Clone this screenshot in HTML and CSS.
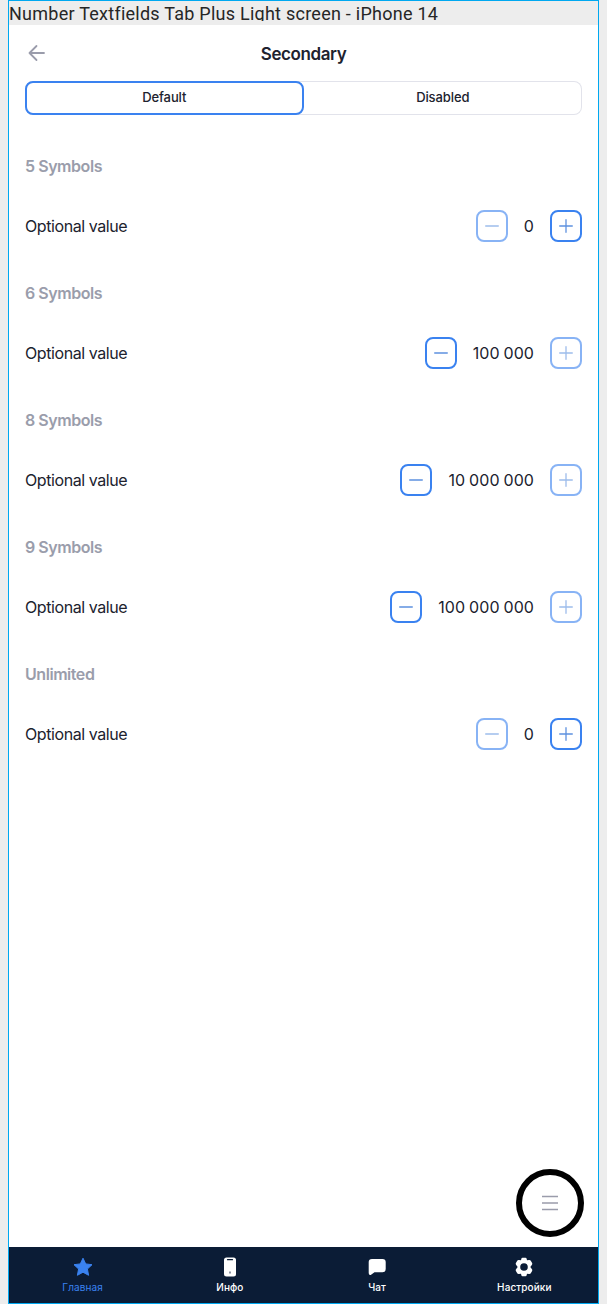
FILE: index.html
```html
<!DOCTYPE html>
<html lang="en">
<head>
<meta charset="utf-8">
<title>Number Textfields</title>
<link rel="stylesheet" href="styles.css">
</head>
<body>
<svg class="defs" width="0" height="0">
  <symbol id="minus" viewBox="0 0 14 14"><path d="M.7 7h12.6"/></symbol>
  <symbol id="plus" viewBox="0 0 14 14"><path d="M.7 7h12.6M7 .7v12.6"/></symbol>
</svg>
<div class="frame">
  <div class="caption">Number Textfields Tab Plus Light screen - iPhone 14</div>
  <header class="header">
    <svg class="back" width="18" height="18" viewBox="0 0 18 18"><path d="M8.500 2 1.500 9l7 7M1.500 9h14.500"/></svg>
    <h1 class="title">Secondary</h1>
  </header>
  <div class="tabs">
    <div class="tab tab-active">Default</div>
    <div class="tab">Disabled</div>
  </div>
  <main class="content">
    <section class="group">
      <h2 class="heading">5 Symbols</h2>
      <div class="row"><span class="label">Optional value</span>
        <div class="stepper"><button class="step off"><svg><use href="#minus"/></svg></button><span class="value">0</span><button class="step"><svg><use href="#plus"/></svg></button></div></div>
    </section>
    <section class="group">
      <h2 class="heading">6 Symbols</h2>
      <div class="row"><span class="label">Optional value</span>
        <div class="stepper"><button class="step"><svg><use href="#minus"/></svg></button><span class="value">100 000</span><button class="step off"><svg><use href="#plus"/></svg></button></div></div>
    </section>
    <section class="group">
      <h2 class="heading">8 Symbols</h2>
      <div class="row"><span class="label">Optional value</span>
        <div class="stepper"><button class="step"><svg><use href="#minus"/></svg></button><span class="value">10 000 000</span><button class="step off"><svg><use href="#plus"/></svg></button></div></div>
    </section>
    <section class="group">
      <h2 class="heading">9 Symbols</h2>
      <div class="row"><span class="label">Optional value</span>
        <div class="stepper"><button class="step"><svg><use href="#minus"/></svg></button><span class="value">100 000 000</span><button class="step off"><svg><use href="#plus"/></svg></button></div></div>
    </section>
    <section class="group">
      <h2 class="heading">Unlimited</h2>
      <div class="row"><span class="label">Optional value</span>
        <div class="stepper"><button class="step off"><svg><use href="#minus"/></svg></button><span class="value">0</span><button class="step"><svg><use href="#plus"/></svg></button></div></div>
    </section>
  </main>
  <button class="fab"><svg width="18" height="16" viewBox="0 0 18 16"><path d="M1 1.500h16M1 8h16M1 14.500h16"/></svg></button>
  <nav class="nav">
    <a class="item active">
      <svg width="20" height="20" viewBox="0 0 20 20"><path d="m10 1.200 2.700 5.700 6.300.8-4.600 4.300 1.200 6.300-5.600-3.100-5.600 3.100 1.200-6.300L1 7.700l6.300-.8z" stroke="currentColor" stroke-linejoin="round"/></svg>
      <span>Главная</span></a>
    <a class="item">
      <svg width="20" height="20" viewBox="0 0 20 20"><rect x="4" y=".5" width="12" height="19" rx="2.500"/><path d="M7.500 2.700h5" stroke="#0b1c36" stroke-width="1.200" stroke-linecap="round"/><rect class="home" x="9" y="14.500" width="2" height="2"/></svg>
      <span>Инфо</span></a>
    <a class="item">
      <svg width="20" height="20" viewBox="0 0 20 20"><path d="M5 2h10.500Q18.700 2 18.700 5v7q0 3.200-3.200 3.200H7.500l-3.800 2.800Q1.700 18.500 1.700 16V5Q1.700 2 5 2z"/></svg>
      <span>Чат</span></a>
    <a class="item">
      <svg width="20" height="20" viewBox="0 0 20 20"><path fill-rule="evenodd" d="M8.500.8h3q1 0 1.200 1.300l.3 1.200 2-.3q1.200-.2 1.800.8l1.300 2.300q.5 1-.3 1.800L16.300 10l1.500 2.100q.8.8.3 1.800L16.800 16.200q-.6 1-1.800.8l-2-.3-.3 1.200q-.2 1.300-1.200 1.300h-3q-1 0-1.200-1.300L7 16.700l-2 .3q-1.200.2-1.800-.8L1.900 13.900q-.5-1 .3-1.800L3.700 10 2.200 7.900q-.8-.8-.3-1.800L3.200 3.800Q3.800 2.800 5 3l2 .3.300-1.200Q7.500.8 8.500.8zM10 6.200a3.800 3.800 0 1 0 0 7.600 3.800 3.800 0 0 0 0-7.600z"/></svg>
      <span>Настройки</span></a>
  </nav>
</div>
</body>
</html>
```
FILE: styles.css
```css
* { box-sizing: border-box; }
body { margin: 0; background: #ededed; font-family: Inter, sans-serif; color: #20222e; }
.defs { position: absolute; }
button { padding: 0; margin: 0; background: none; font: inherit; }
.frame { position: relative; width: 591px; height: 1304px; margin-left: 8px; border: 1px solid #00a8f0; background: #fff; display: flex; flex-direction: column; }
.caption { flex: none; height: 20px; overflow: hidden; background: #ededed; font: 18px/26px Roboto, sans-serif; letter-spacing: .25px; color: #262626; white-space: nowrap; }
.header { display: grid; grid-template-columns: 24px 1fr 24px; align-items: center; height: 60px; border-top: 4px solid #ededed; padding: 0 16px; }
.back { margin-left: 3px; fill: none; stroke: #9a9cab; stroke-width: 1.800; stroke-linecap: round; stroke-linejoin: round; }
.title { margin: 1px 0 0; text-align: center; font-size: 17px; line-height: 24px; font-weight: 600; letter-spacing: -.4px; }
.tabs { display: flex; flex: none; height: 34px; margin: 0 16px; border-radius: 8px; box-shadow: inset 0 0 0 1px #e2e3eb; }
.tab { width: 50%; text-align: center; font-size: 13px; line-height: 32px; font-weight: 500; letter-spacing: -.1px; border-radius: 8px; }
.tab-active { border: 2px solid #3a82f0; line-height: 28px; }
.content { padding: 0 16px; flex: 1; }
.group { height: 127px; padding-top: 40px; }
.heading { margin: 0 0 32px; font-size: 16px; line-height: 23px; font-weight: 600; letter-spacing: -.45px; color: #9a9dab; }
.row { display: flex; height: 32px; align-items: center; justify-content: space-between; }
.label { font-size: 16px; letter-spacing: -.42px; }
.stepper { display: flex; align-items: center; gap: 16px; }
.value { font-size: 16px; letter-spacing: .08px; word-spacing: -.7px; white-space: nowrap; }
.step { display: flex; align-items: center; justify-content: center; width: 32px; height: 32px; border: 2px solid #3a82f0; border-radius: 8px; }
.step svg { width: 14px; height: 14px; fill: none; stroke: #5e91df; stroke-width: 1.300; stroke-linecap: round; }
.off { opacity: .6; }
.fab { position: absolute; right: 14px; bottom: 66px; width: 68px; height: 68px; border: 6px solid #000; border-radius: 50%; background: #fff; display: flex; align-items: center; justify-content: center; }
.fab svg { fill: none; stroke: #9a9cab; stroke-width: 1.300; }
.nav { display: grid; grid-template-columns: repeat(4, 1fr); height: 56px; flex: none; background: #0b1c36; color: #fff; }
.item { display: flex; flex-direction: column; align-items: center; padding-top: 10px; gap: 4px; font-size: 10px; line-height: 13px; font-weight: 500; letter-spacing: .1px; }
.item svg { fill: currentColor; flex: none; }
.item .home { fill: #8c94a3; }
.active { color: #3a82f0; }
.active span { font-weight: 400; }
```
